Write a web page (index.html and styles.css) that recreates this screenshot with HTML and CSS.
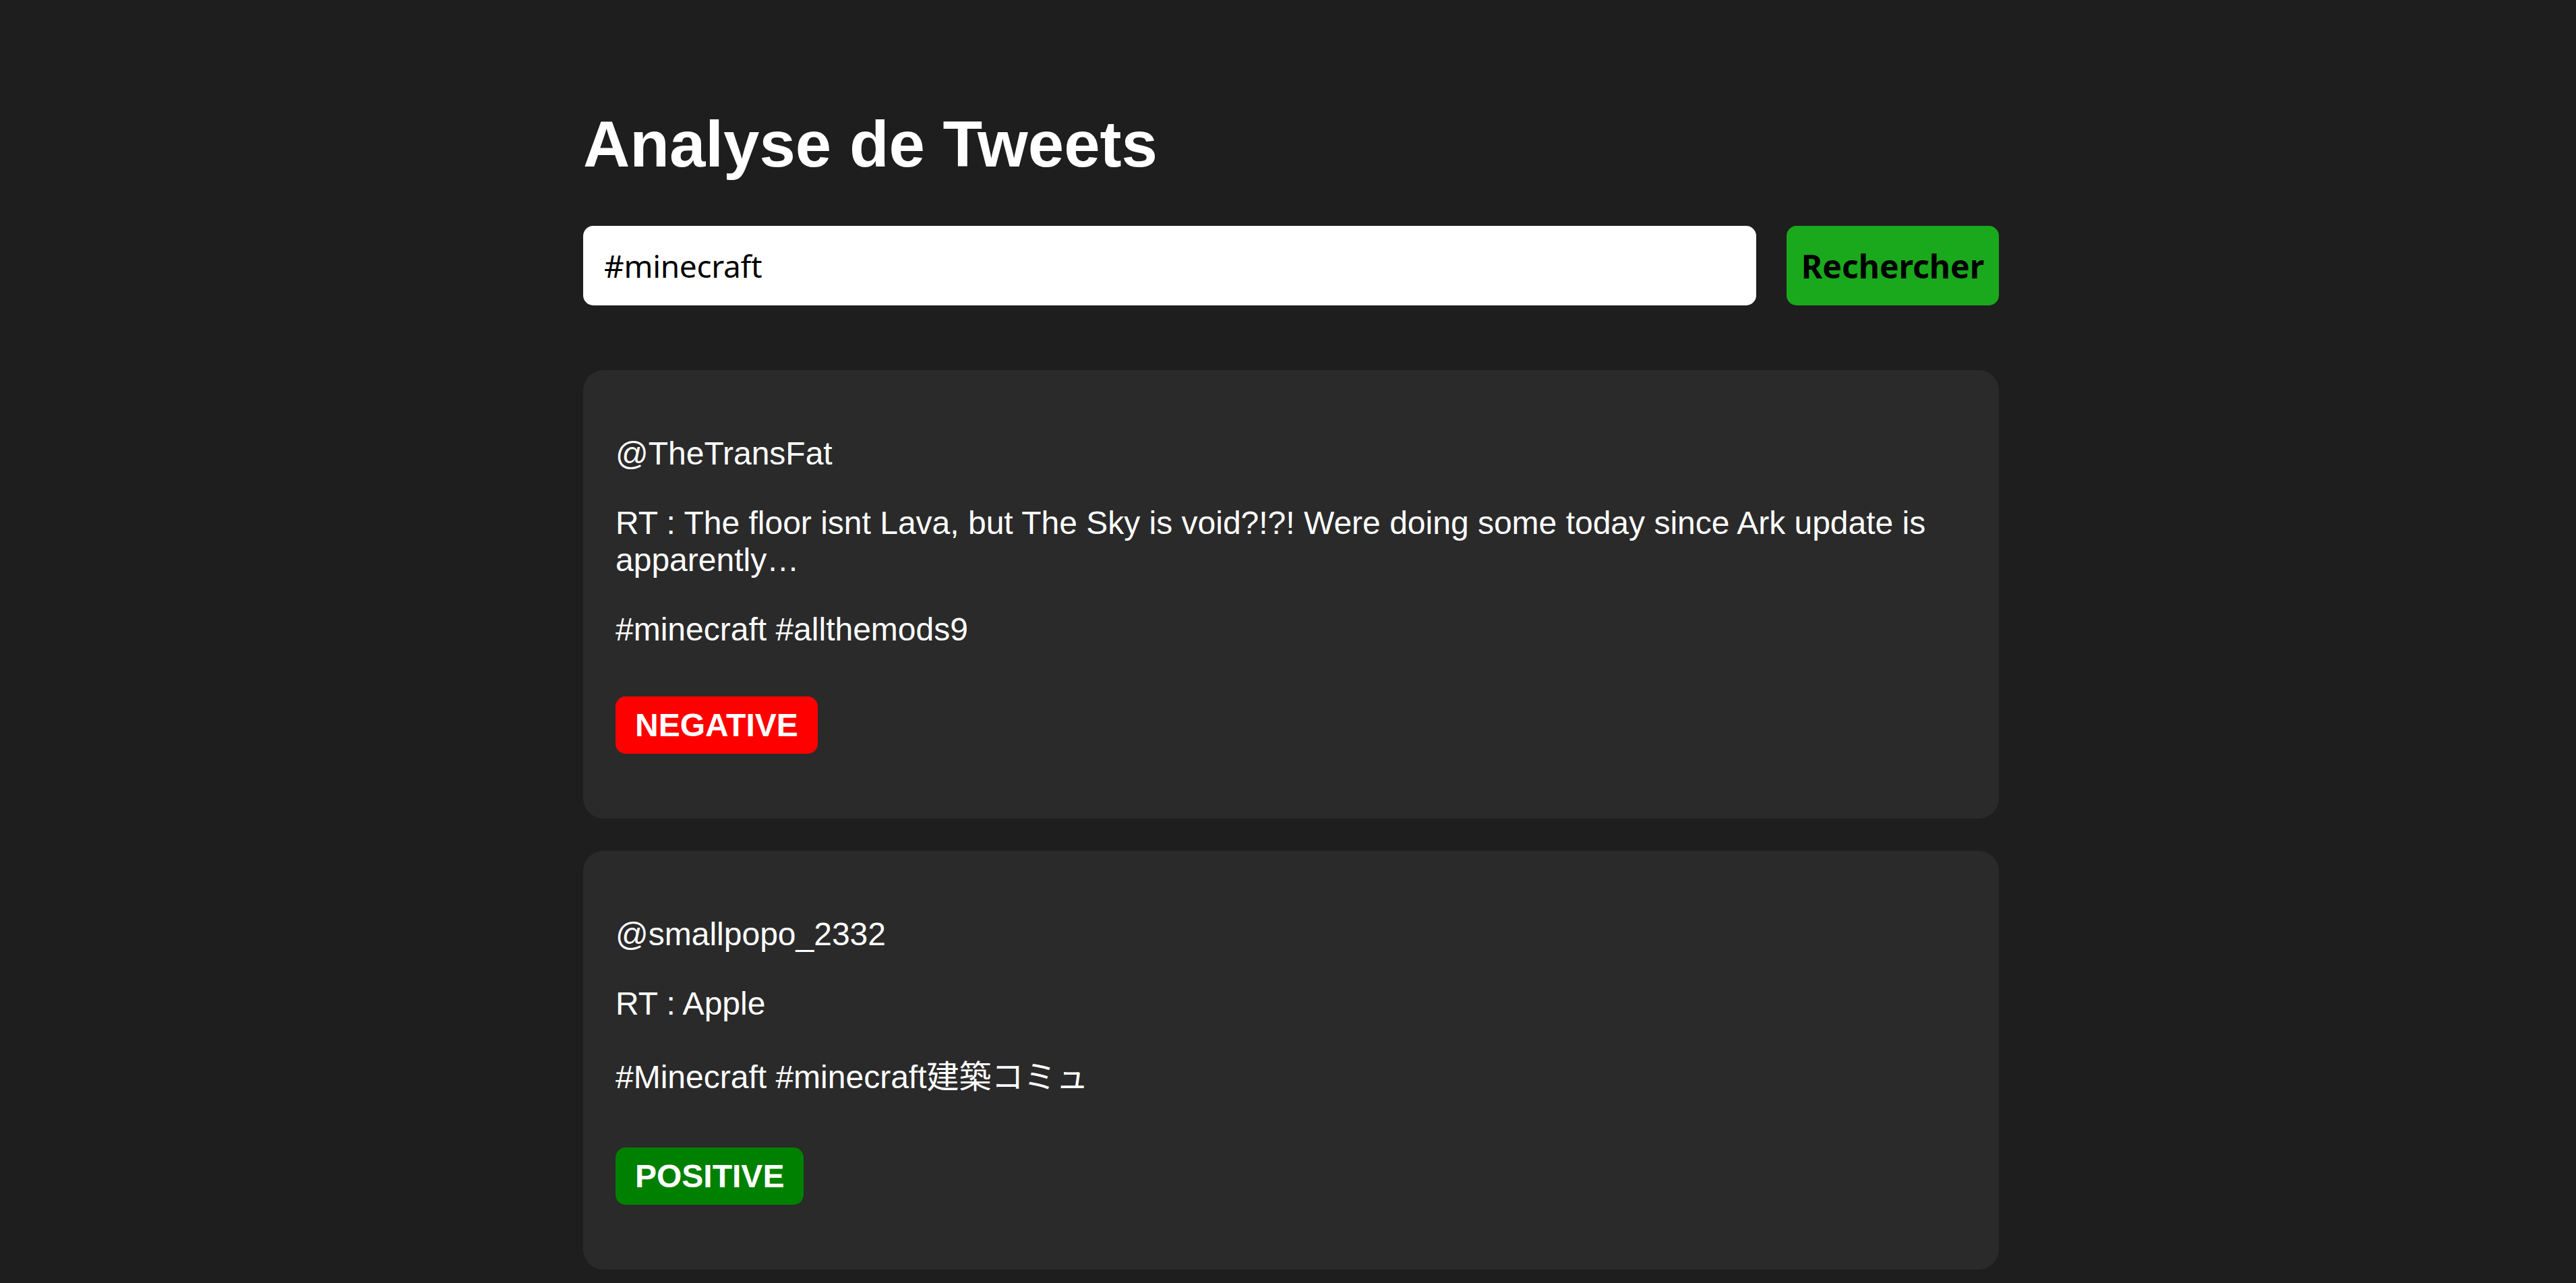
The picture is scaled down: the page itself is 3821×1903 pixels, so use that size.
FILE: index.html
```html
<!DOCTYPE html>
<html lang="fr">
<head>
<meta charset="utf-8">
<title>Analyse de Tweets</title>
<link rel="stylesheet" href="styles.css">
</head>
<body>
<div class="page">
  <h1 class="title">Analyse de Tweets</h1>
  <form class="search">
    <input class="search-input" type="text" value="#minecraft">
    <button class="search-button" type="button">Rechercher</button>
  </form>
  <div class="tweets">
    <div class="tweet">
      <p class="tweet-line">@TheTransFat</p>
      <p class="tweet-line">RT : The floor isnt Lava, but The Sky is void?!?! Were doing some today since Ark update is apparently…</p>
      <p class="tweet-line">#minecraft #allthemods9</p>
      <div class="sentiment"><span class="badge badge-negative">NEGATIVE</span></div>
    </div>
    <div class="tweet">
      <p class="tweet-line">@smallpopo_2332</p>
      <p class="tweet-line">RT : Apple</p>
      <p class="tweet-line tweet-line-cjk">#Minecraft #minecraft建築コミュ</p>
      <div class="sentiment"><span class="badge badge-positive">POSITIVE</span></div>
    </div>
  </div>
</div>
</body>
</html>
```
FILE: styles.css
```css
html, body {
  margin: 0;
  background: #1e1e1e;
}
body {
  padding: 0 0 0 9px;
  color: #ffffff;
  font-family: "Liberation Sans", Arial, "Noto Sans CJK JP", sans-serif;
}
.page {
  width: 2100px;
  margin: 0 auto;
  padding-top: 159px;
}
.title {
  margin: 0 0 66px;
  font-size: 96px;
  line-height: 110px;
  font-weight: bold;
}
.search {
  display: flex;
  align-items: stretch;
  height: 118px;
  margin: 0 0 96px;
}
.search-input {
  box-sizing: border-box;
  flex: 1;
  min-width: 0;
  height: 118px;
  padding: 0 31px;
  border: none;
  border-radius: 15px;
  background: #ffffff;
  color: #000000;
  font-family: "Noto Sans", "Open Sans", sans-serif;
  font-size: 46px;
  letter-spacing: -0.3px;
  outline: none;
}
.search-button {
  box-sizing: border-box;
  flex: 0 0 315px;
  height: 118px;
  margin-left: 45px;
  padding: 0;
  border: none;
  border-radius: 15px;
  background: #1aa91c;
  color: #000000;
  font-family: "Noto Sans", "Open Sans", sans-serif;
  font-weight: bold;
  font-size: 48px;
}
.tweet {
  background: #2a2a2a;
  border-radius: 30px;
  padding: 48px;
  margin-bottom: 48px;
}
.tweet-line {
  margin: 48px 0;
  font-size: 48px;
  line-height: 55px;
}
.tweet-line-cjk {
  line-height: 64px;
  padding-top: 2px;
  margin-bottom: 46px;
}
.sentiment {
  display: flex;
  margin: 72px 0 48px;
}
.badge {
  display: inline-block;
  padding: 15px 29px;
  border-radius: 15px;
  color: #ffffff;
  font-size: 48px;
  line-height: 55px;
  font-weight: bold;
}
.badge-negative {
  background: #ff0000;
}
.badge-positive {
  background: #008000;
}
```
